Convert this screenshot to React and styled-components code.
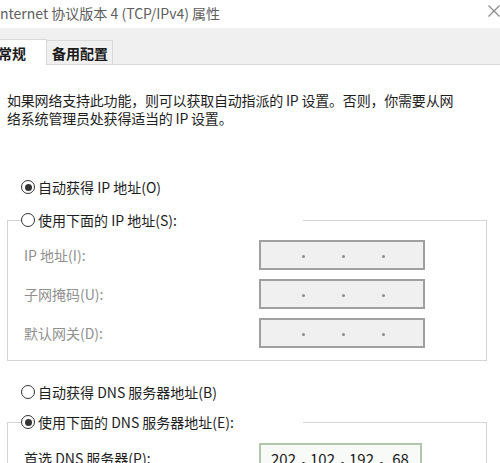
import styled, {createGlobalStyle} from "styled-components"

const GlobalStyle = createGlobalStyle`
    html, body {
        margin: 0;
        padding: 0;
        background: #ffffff;
    }
    body {
        font-family: "Noto Sans CJK SC", "Noto Sans", sans-serif;
        color: #1e1e1e;
    }
`

const Window = styled.div`
    width: 500px;
    height: 463px;
    overflow: hidden;
    display: flex;
    flex-direction: column;
`

const TitleBar = styled.div`
    height: 28px;
    flex: none;
    display: flex;
    flex-direction: row;
    justify-content: space-between;
    align-items: flex-start;
    background: #ffffff;
`

const Title = styled.div`
    padding-top: 3px;
    font-size: 14px;
    line-height: 20px;
    color: #5e5e5e;
    white-space: nowrap;
`

const CloseIcon = styled.svg`
    flex: none;
    display: block;
    margin-top: 5px;
    margin-right: 0;
    width: 12px;
    height: 12px;
`

const TabStrip = styled.div`
    height: 36px;
    flex: none;
    display: flex;
    flex-direction: row;
    align-items: flex-end;
    background: #f0f0f0;
    border-bottom: 1px solid #d9d9d9;
`

const Tab = styled.div`
    display: flex;
    align-items: center;
    font-size: 14px;
    font-weight: 600;
    color: #1a1a1a;
    white-space: nowrap;
    border-top: 1px solid #d9d9d9;
    border-right: 1px solid #d9d9d9;
    box-sizing: border-box;
    height: ${p => (p.$active ? "26px" : "24px")};
    margin-bottom: ${p => (p.$active ? "-1px" : "0")};
    margin-left: ${p => (p.$active ? "-2px" : "0")};
    padding: ${p => (p.$active ? "0 20px 0 0" : "0 4px 0 5px")};
    background: ${p => (p.$active ? "#ffffff" : "#f0f0f0")};
`

const Content = styled.div`
    padding: 0 7px;
    display: flex;
    flex-direction: column;
`

const Intro = styled.p`
    margin: 26px 0 0 0;
    font-size: 14px;
    line-height: 18px;
    letter-spacing: -0.2px;
    white-space: nowrap;
`

const RadioRow = styled.div`
    height: 20px;
    display: flex;
    flex-direction: row;
    align-items: center;
    gap: 3px;
    font-size: 14px;
    white-space: nowrap;
    margin-top: ${p => p.$top || 0}px;
    padding-left: 14px;
`

const Radio = styled.span`
    width: 14px;
    height: 14px;
    box-sizing: border-box;
    border: 1px solid #333333;
    border-radius: 50%;
    display: flex;
    align-items: center;
    justify-content: center;
    background: #ffffff;

    &::after {
        content: "";
        width: 7px;
        height: 7px;
        border-radius: 50%;
        background: ${p => (p.$checked ? "#333333" : "transparent")};
    }
`

const Group = styled.fieldset`
    box-sizing: border-box;
    width: 480px;
    align-self: flex-start;
    margin: ${p => p.$top}px 0 0 0;
    padding: 0 0 12px 13px;
    border: 1px solid #d4d4d4;
    min-width: 0;
`

const Legend = styled.legend`
    padding: 0;
    width: 282px;
    height: 20px;
    display: flex;
    flex-direction: row;
    align-items: center;
    gap: 3px;
    font-size: 14px;
    white-space: nowrap;
`

const Fields = styled.div`
    display: flex;
    flex-direction: column;
    gap: 9px;
    margin-top: ${p => p.$top}px;
`

const FieldRow = styled.div`
    display: flex;
    flex-direction: row;
    align-items: center;
`

const FieldLabel = styled.div`
    width: 235px;
    padding-left: 3px;
    font-size: 14px;
    white-space: nowrap;
    color: ${p => (p.$disabled ? "#909090" : "#1e1e1e")};
`

const IpBox = styled.div`
    width: ${p => p.$width}px;
    height: 30px;
    box-sizing: border-box;
    display: flex;
    flex-direction: row;
    align-items: center;
    padding-left: 3px;
    border: 2px solid ${p => (p.$disabled ? "#a0a0a0" : "#b2c6ad")};
    background: ${p => (p.$disabled ? "#f0f0f0" : "#f7faf6")};
`

const Octet = styled.span`
    width: 40px;
    text-align: center;
    font-size: 15px;
    color: #1a1a1a;
`

const Dot = styled.span`
    width: 0;
    display: flex;
    justify-content: center;
    align-items: center;

    &::before {
        content: "";
        flex: none;
        width: 3px;
        height: 3px;
        border-radius: 50%;
        margin-top: ${p => (p.$disabled ? "3px" : "10px")};
        background: ${p => (p.$disabled ? "#8d8d8d" : "#222222")};
    }
`

const IpField = ({values, disabled, width}) => {
    const parts = values || ["", "", "", ""]
    return (
        <IpBox $disabled={disabled} $width={width}>
            {parts.map((v, i) => [
                i > 0 && <Dot key={"d" + i} $disabled={disabled} />,
                <Octet key={"o" + i}>{v}</Octet>,
            ])}
        </IpBox>
    )
}

export default function App() {
    return (
        <>
            <GlobalStyle />
            <Window>
                <TitleBar>
                    <Title>nternet 协议版本 4 (TCP/IPv4) 属性</Title>
                    <CloseIcon viewBox="0 0 12 12" fill="none">
                        <path d="M0.5 0.5 L11.5 11.5 M11.5 0.5 L0.5 11.5" stroke="#8a8a8a" strokeWidth="1.2" />
                    </CloseIcon>
                </TitleBar>
                <TabStrip>
                    <Tab $active>常规</Tab>
                    <Tab>备用配置</Tab>
                </TabStrip>
                <Content>
                    <Intro>
                        如果网络支持此功能，则可以获取自动指派的 IP 设置。否则，你需要从网
                        <br />
                        络系统管理员处获得适当的 IP 设置。
                    </Intro>

                    <RadioRow $top={50}>
                        <Radio $checked />
                        自动获得 IP 地址(O)
                    </RadioRow>

                    <Group $top={13}>
                        <Legend>
                            <Radio />
                            使用下面的 IP 地址(S):
                        </Legend>
                        <Fields $top={10}>
                            <FieldRow>
                                <FieldLabel $disabled>IP 地址(I):</FieldLabel>
                                <IpField disabled width={166} />
                            </FieldRow>
                            <FieldRow>
                                <FieldLabel $disabled>子网掩码(U):</FieldLabel>
                                <IpField disabled width={166} />
                            </FieldRow>
                            <FieldRow>
                                <FieldLabel $disabled>默认网关(D):</FieldLabel>
                                <IpField disabled width={166} />
                            </FieldRow>
                        </Fields>
                    </Group>

                    <RadioRow $top={21}>
                        <Radio />
                        自动获得 DNS 服务器地址(B)
                    </RadioRow>

                    <Group $top={10}>
                        <Legend>
                            <Radio $checked />
                            使用下面的 DNS 服务器地址(E):
                        </Legend>
                        <Fields $top={11}>
                            <FieldRow>
                                <FieldLabel>首选 DNS 服务器(P):</FieldLabel>
                                <IpField values={["202", "102", "192", "68"]} width={163} />
                            </FieldRow>
                        </Fields>
                    </Group>
                </Content>
            </Window>
        </>
    )
}
